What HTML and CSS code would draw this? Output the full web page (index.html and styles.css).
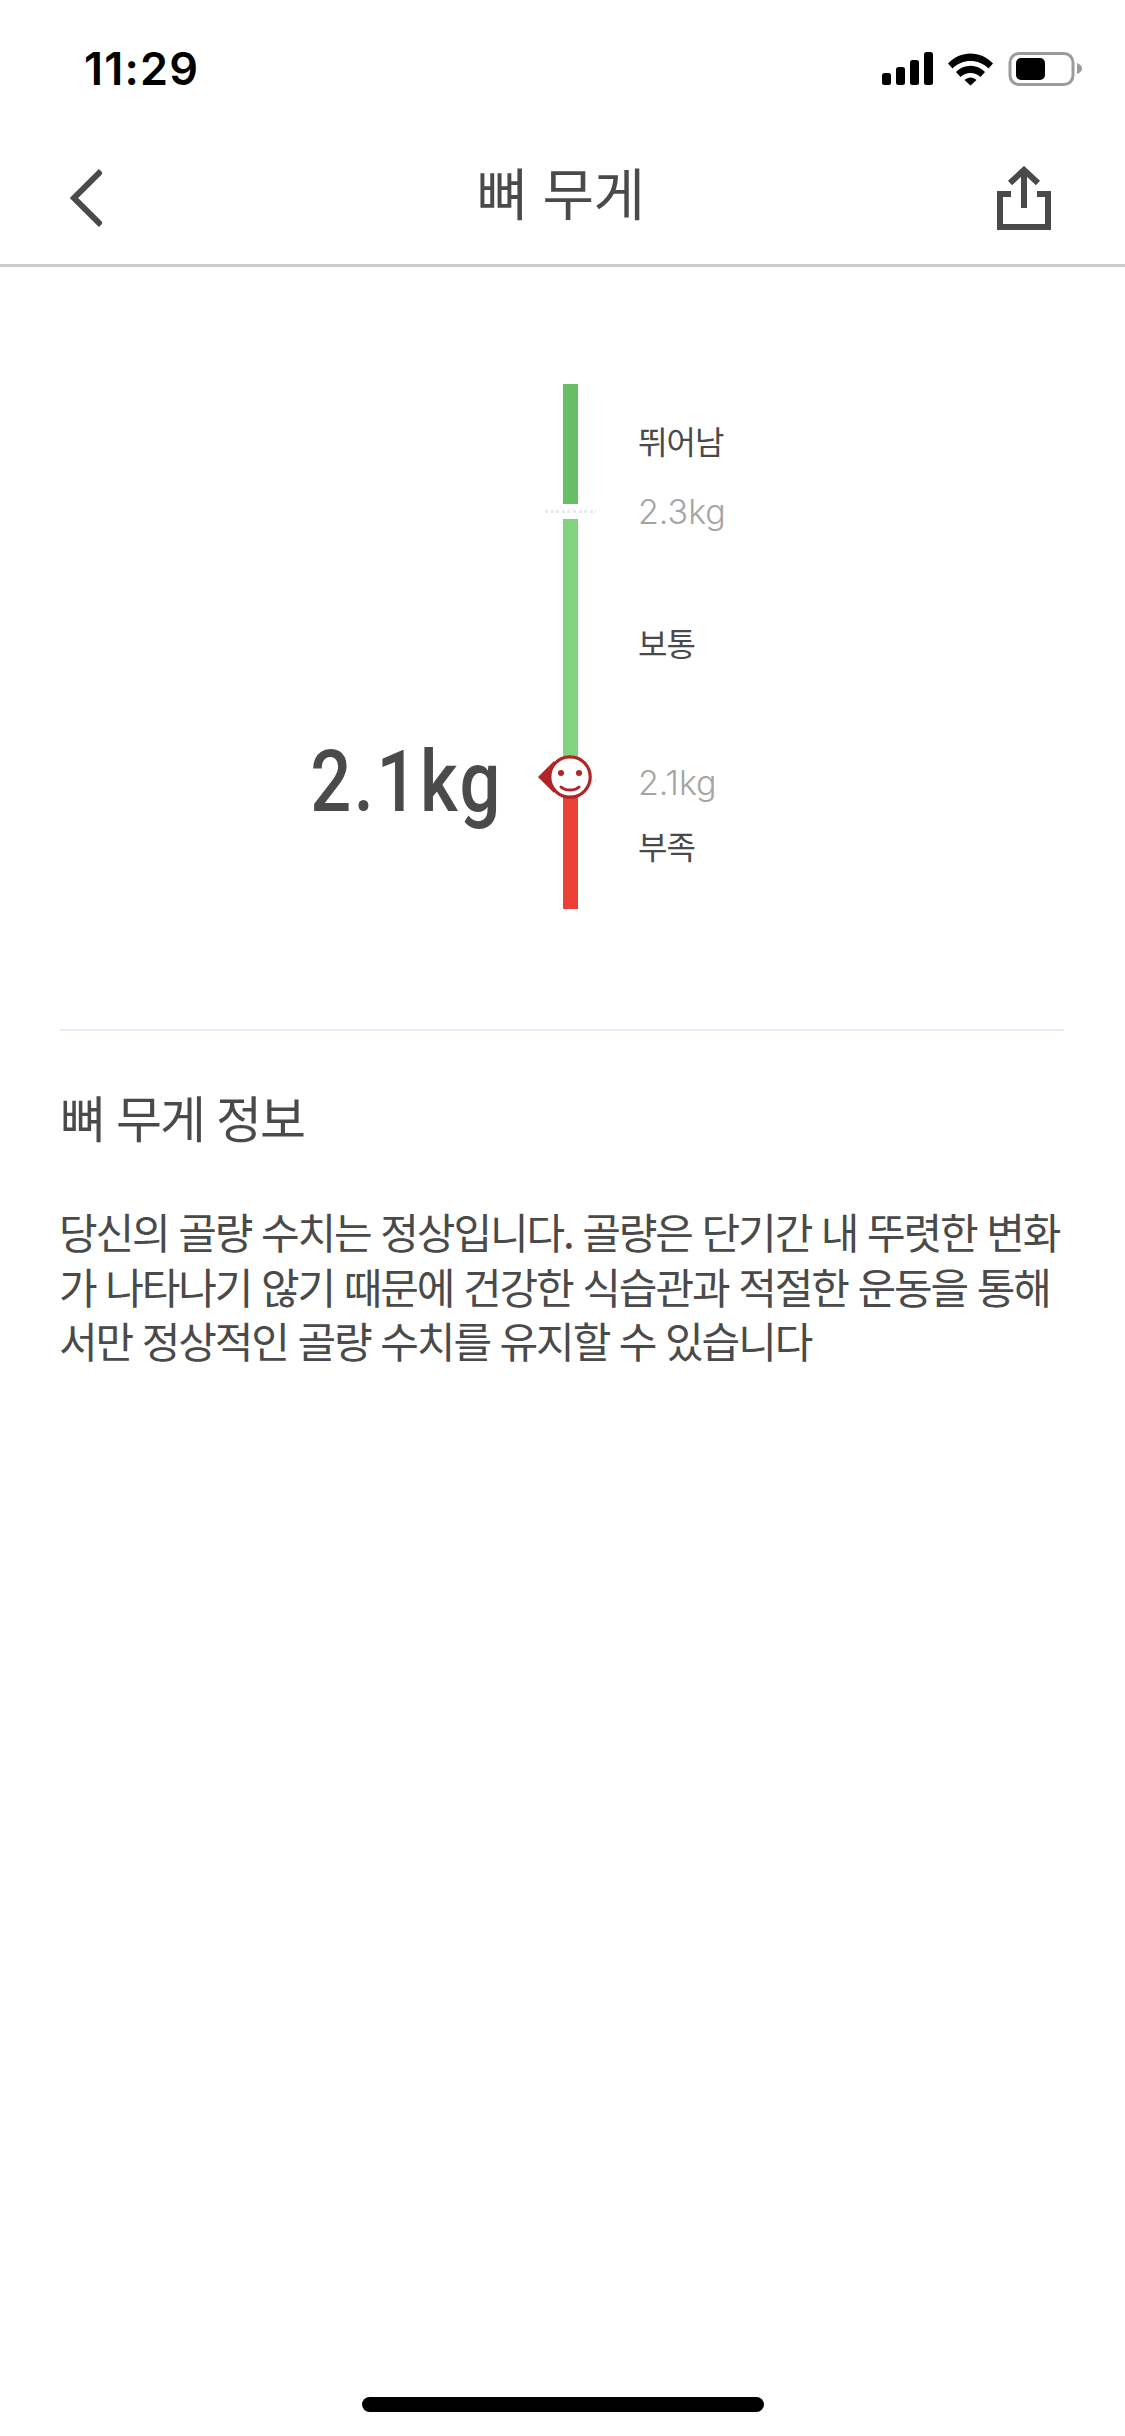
FILE: index.html
```html
<!DOCTYPE html>
<html lang="ko">
<head>
    <meta charset="UTF-8">
    <meta name="viewport" content="width=device-width, initial-scale=1.0">
    <title>뼈 무게</title>
    <link rel="stylesheet" href="styles.css">
</head>
<body>
    <div class="status-bar">
        <span class="clock">11:29</span>
        <svg class="status-icons" width="200" height="34" viewBox="882 52 200 34">
            <rect x="882" y="73" width="9" height="12" rx="2.5"/>
            <rect x="896" y="67" width="9" height="18" rx="2.5"/>
            <rect x="910" y="60" width="9" height="25" rx="2.5"/>
            <rect x="924" y="52" width="9" height="33" rx="2.5"/>
            <path d="M948 63.5C960 50 981 50 993 63.5L988.5 68.5C979 58.5 962 58.5 952.5 68.5Z"/>
            <path d="M956 72C964 63.5 977 63.5 985 72L980.5 77C975 71.5 966 71.5 960.5 77Z"/>
            <path d="M964.5 80C968 76.5 973 76.5 976.5 80L970.5 85.5Z"/>
            <rect x="1010" y="53.5" width="63" height="31" rx="9" fill="none" stroke="#9b9b9b" stroke-width="3"/>
            <rect x="1016" y="58" width="29" height="22" rx="5"/>
            <path d="M1077 63C1080 64 1082 66 1082 68.5S1080 73 1077 74Z" fill="#9b9b9b"/>
        </svg>
    </div>

    <header class="nav">
        <svg class="nav-icon" width="32" height="60" viewBox="0 0 32 60">
            <path d="M31 3L4 30L31 57" fill="none" stroke="#4a4a4a" stroke-width="6"/>
        </svg>
        <h1 class="nav-title">뼈 무게</h1>
        <svg class="nav-icon nav-share" width="54" height="64" viewBox="0 0 54 64">
            <path d="M14 28H3V61H51V28H40" fill="none" stroke="#4a4a4a" stroke-width="6"/>
            <path d="M27 42V6M13 17L27 4L41 17" fill="none" stroke="#4a4a4a" stroke-width="6"/>
        </svg>
    </header>

    <main class="content">
        <section class="gauge">
            <div class="gauge-value">2.1kg</div>
            <div class="gauge-bar">
                <div class="seg seg-high"></div>
                <div class="dots"></div>
                <div class="seg seg-mid"></div>
                <div class="dots"></div>
                <div class="seg seg-low"></div>
                <svg class="marker" width="58" height="48" viewBox="0 0 58 48">
                    <path d="M0 24L16 8V40Z" fill="#b02528"/>
                    <circle cx="32" cy="24" r="20.2" fill="#fff" stroke="#b02528" stroke-width="3.2"/>
                    <circle cx="23" cy="20" r="3" fill="#b02528"/>
                    <circle cx="41" cy="20" r="3" fill="#b02528"/>
                    <path d="M23 34C27 38 37 38 41 34" fill="none" stroke="#b02528" stroke-width="3" stroke-linecap="round"/>
                </svg>
            </div>
            <div class="gauge-labels">
                <div class="label label-high">뛰어남</div>
                <div class="label label-num num-high">2.3kg</div>
                <div class="label label-mid">보통</div>
                <div class="label label-num num-low">2.1kg</div>
                <div class="label label-low">부족</div>
            </div>
        </section>

        <section class="info">
            <h2 class="info-title">뼈 무게 정보</h2>
            <p class="info-text">당신의 골량 수치는 정상입니다. 골량은 단기간 내 뚜렷한 변화가 나타나기 않기 때문에 건강한 식습관과 적절한 운동을 통해서만 정상적인 골량 수치를 유지할 수 있습니다</p>
        </section>
    </main>

    <div class="home-bar"></div>
</body>
</html>
```

FILE: styles.css
```css
* {
    box-sizing: border-box;
}
body {
    margin: 0;
    width: 1125px;
    height: 2436px;
    display: flex;
    flex-direction: column;
    background-color: #fff;
    font-family: "Noto Sans CJK KR", "Noto Sans", sans-serif;
    color: #4a4a4a;
}

/* status bar */
.status-bar {
    height: 106px;
    padding: 46px 43px 0 84px;
    display: flex;
    justify-content: space-between;
    align-items: flex-start;
}
.clock {
    font-family: Inter, sans-serif;
    font-size: 45px;
    font-weight: 600;
    line-height: 46px;
    letter-spacing: 1.2px;
    color: #000;
}
.status-icons {
    margin-top: 6px;
}

/* nav */
.nav {
    height: 161px;
    padding: 26px 74px 0 70px;
    display: grid;
    grid-template-columns: 1fr auto 1fr;
    align-items: center;
    border-bottom: 3px solid #ccc;
}
.nav-title {
    margin: 0 0 15px;
    font-size: 56px;
    font-weight: 400;
    line-height: 60px;
    letter-spacing: -0.5px;
}
.nav-share {
    justify-self: end;
}

/* gauge */
.gauge {
    padding-top: 117px;
    display: flex;
    align-items: flex-start;
}
.gauge-value {
    width: 503px;
    margin-top: 348px;
    font-family: Roboto, sans-serif;
    font-size: 86px;
    font-weight: 500;
    line-height: 100px;
    letter-spacing: 3px;
    text-align: right;
    transform: scaleX(0.84);
    transform-origin: right center;
}
.gauge-bar {
    position: relative;
    width: 15px;
    margin-left: 60px;
    display: flex;
    flex-direction: column;
}
.seg {
    width: 15px;
}
.seg-high {
    height: 120px;
    background-color: #66bf62;
}
.seg-mid {
    height: 254px;
    background-color: #82d37e;
}
.seg-low {
    height: 121px;
    background-color: #ec4135;
}
.dots {
    width: 51px;
    height: 3px;
    margin: 6px 0 6px -18px;
    background: repeating-linear-gradient(90deg, #e6eaf8 0 3px, transparent 3px 5.6px);
}
.marker {
    position: absolute;
    left: -25px;
    top: 369px;
}
.gauge-labels {
    margin-left: 60px;
}
.label {
    font-size: 32px;
    line-height: 40px;
    letter-spacing: -1px;
}
.label-num {
    font-family: Inter, sans-serif;
    font-size: 34px;
    color: #a5a5a5;
    font-weight: 300;
    letter-spacing: 0;
}
.label-high {
    margin-top: 36px;
}
.num-high {
    margin-top: 32px;
}
.label-mid {
    margin-top: 90px;
}
.num-low {
    margin-top: 101px;
}
.label-low {
    margin-top: 22px;
}

/* info */
.info {
    margin: 120px 61px 0 60px;
    padding-top: 55px;
    border-top: 2px solid #e4ecf6;
}
.info-title {
    margin: 0;
    font-size: 50px;
    font-weight: 400;
    line-height: 60px;
    letter-spacing: -2px;
}
.info-text {
    margin: 58px 0 0 -1px;
    font-size: 42px;
    line-height: 54.5px;
    letter-spacing: -2.1px;
    word-break: break-all;
}

.content {
    flex: 1;
}
.home-bar {
    width: 402px;
    height: 15px;
    margin: 0 auto 24px 362px;
    border-radius: 8px;
    background-color: #000;
}
```
